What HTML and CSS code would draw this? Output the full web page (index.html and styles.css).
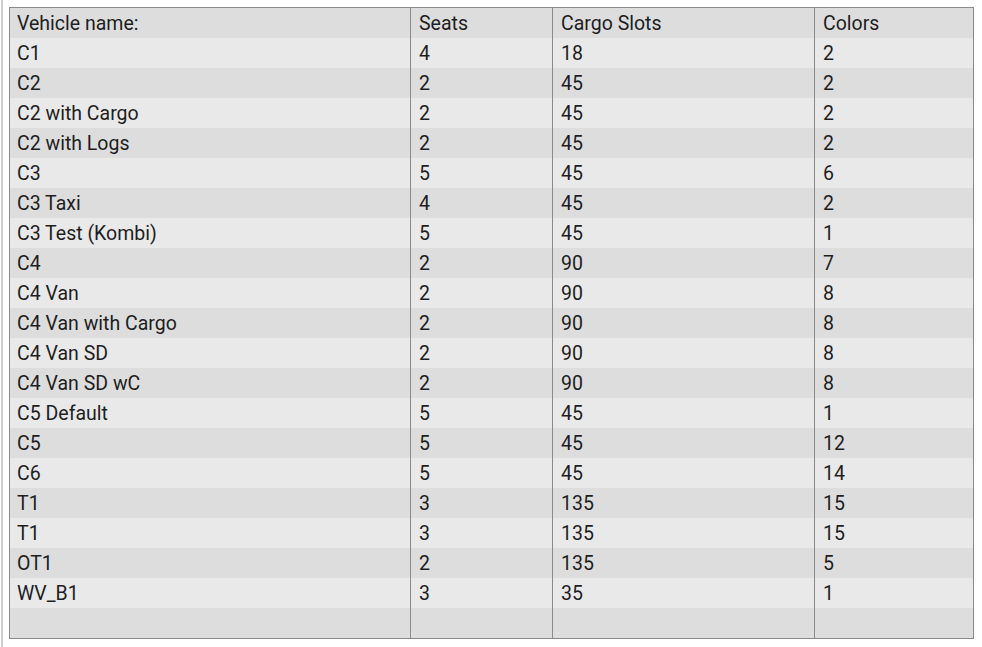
FILE: index.html
```html
<!DOCTYPE html>
<html>
<head>
<meta charset="utf-8">
<link rel="stylesheet" href="styles.css">
</head>
<body>
<div class="page">
<table class="vehicles">
<colgroup><col class="c1"><col class="c2"><col class="c3"><col class="c4"></colgroup>
<tr><td>Vehicle name:</td><td>Seats</td><td>Cargo Slots</td><td>Colors</td></tr>
<tr><td>C1</td><td>4</td><td>18</td><td>2</td></tr>
<tr><td>C2</td><td>2</td><td>45</td><td>2</td></tr>
<tr><td>C2 with Cargo</td><td>2</td><td>45</td><td>2</td></tr>
<tr><td>C2 with Logs</td><td>2</td><td>45</td><td>2</td></tr>
<tr><td>C3</td><td>5</td><td>45</td><td>6</td></tr>
<tr><td>C3 Taxi</td><td>4</td><td>45</td><td>2</td></tr>
<tr><td>C3 Test (Kombi)</td><td>5</td><td>45</td><td>1</td></tr>
<tr><td>C4</td><td>2</td><td>90</td><td>7</td></tr>
<tr><td>C4 Van</td><td>2</td><td>90</td><td>8</td></tr>
<tr><td>C4 Van with Cargo</td><td>2</td><td>90</td><td>8</td></tr>
<tr><td>C4 Van SD</td><td>2</td><td>90</td><td>8</td></tr>
<tr><td>C4 Van SD wC</td><td>2</td><td>90</td><td>8</td></tr>
<tr><td>C5 Default</td><td>5</td><td>45</td><td>1</td></tr>
<tr><td>C5</td><td>5</td><td>45</td><td>12</td></tr>
<tr><td>C6</td><td>5</td><td>45</td><td>14</td></tr>
<tr><td>T1</td><td>3</td><td>135</td><td>15</td></tr>
<tr><td>T1</td><td>3</td><td>135</td><td>15</td></tr>
<tr><td>OT1</td><td>2</td><td>135</td><td>5</td></tr>
<tr><td>WV_B1</td><td>3</td><td>35</td><td>1</td></tr>
<tr><td></td><td></td><td></td><td></td></tr>
</table>
</div>
</body>
</html>
```

FILE: styles.css
```css
html, body {
  margin: 0;
  padding: 0;
  background: #ffffff;
}
.page {
  margin-left: 1px;
  border-left: 2px solid #cfcfcf;
  min-height: 647px;
  box-sizing: border-box;
  padding: 7px 0 0 6px;
}
.vehicles {
  border-collapse: collapse;
  width: 964px;
  table-layout: fixed;
  border: 1px solid #8a8a8a;
  font-family: Roboto, "Liberation Sans", sans-serif;
  font-size: 19.5px;
  color: #1e1e1e;
}
.c1 { width: 401px; }
.c2 { width: 142px; }
.c3 { width: 262px; }
.c4 { width: 159px; }
.vehicles tr {
  height: 30px;
}
.vehicles tr:nth-child(odd) {
  background: #dddddd;
}
.vehicles tr:nth-child(even) {
  background: #e9e9e9;
}
.vehicles td {
  padding: 1px 0 0 7px;
  height: 30px;
  box-sizing: border-box;
  vertical-align: middle;
  border-left: 1px solid #8a8a8a;
  line-height: 29px;
  white-space: nowrap;
}
.vehicles td:first-child {
  border-left: none;
}
.vehicles td:not(:first-child) {
  padding-left: 8px;
}
```
